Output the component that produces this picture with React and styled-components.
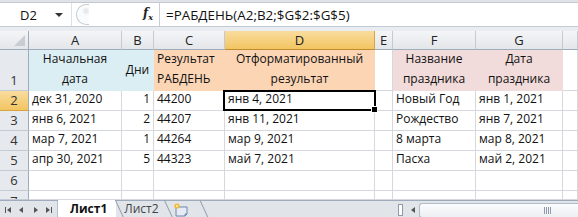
import React from 'react';
import styled, { createGlobalStyle } from 'styled-components';

const GlobalStyle = createGlobalStyle`
  html, body { margin: 0; padding: 0; background: #ffffff; }
  body { font-family: "Open Sans", "Noto Sans", sans-serif; overflow: hidden; }
`;

const COLS = ['A', 'B', 'C', 'D', 'E', 'F', 'G', ''];
const BLUE = '#dbeef4';
const PEACH = '#fcd5b5';
const PINK = '#f2dcdb';
const GRID = '#d5d8dc';

const rows = [
  ['дек 31, 2020', '1', '44200', 'янв 4, 2021', '', 'Новый Год', 'янв 1, 2021'],
  ['янв 6, 2021', '2', '44207', 'янв 11, 2021', '', 'Рождество', 'янв 7, 2021'],
  ['мар 7, 2021', '1', '44264', 'мар 9, 2021', '', '8 марта', 'мар 8, 2021'],
  ['апр 30, 2021', '5', '44323', 'май 7, 2021', '', 'Пасха', 'май 2, 2021'],
];

const Window = styled.div`
  width: 578px;
  height: 217px;
  display: flex;
  flex-direction: column;
  background: #dfe3e8;
  overflow: hidden;
  & > * { flex-shrink: 0; }
`;

const FormulaBar = styled.div`
  height: 23px;
  margin-top: 2px;
  display: flex;
  align-items: stretch;
  background: #ffffff;
  border-top: 1px solid #c4cad2;
  border-bottom: 1px solid #c4cad2;
`;

const NameBox = styled.div`
  width: 72px;
  display: flex;
  align-items: center;
  justify-content: space-between;
  padding: 0 8px 0 20px;
  box-sizing: border-box;
  font-size: 13px;
  color: #111;
  border-right: 1px solid #dde1e6;
`;

const Caret = styled.span`
  width: 0;
  height: 0;
  border-left: 4px solid transparent;
  border-right: 4px solid transparent;
  border-top: 4px solid #333;
`;

const Grip = styled.div`
  width: 88px;
  display: flex;
  align-items: center;
  justify-content: space-between;
  padding: 0 6px 0 4px;
  box-sizing: border-box;
  border-right: 1px solid #c9ced6;
`;

const Knob = styled.span`
  width: 12px;
  height: 19px;
  border: 1px solid #c8cdd4;
  border-right: none;
  border-radius: 10px 0 0 10px;
  background: radial-gradient(circle at 9px 6px, #e8ebee 2px, #fafbfc 4px);
`;

const Fx = styled.span`
  font-family: "DejaVu Serif", "Liberation Serif", serif;
  font-style: italic;
  font-weight: bold;
  font-size: 12px;
  color: #222;
  & sub { font-size: 8px; }
`;

const FormulaText = styled.div`
  display: flex;
  align-items: center;
  padding-left: 6px;
  font-size: 13.4px;
  color: #111;
`;

const Gap = styled.div`
  height: 4px;
  background: #e9ecf0;
`;

const Sheet = styled.div`
  display: grid;
  grid-template-columns: 29px 93px 32px 71px 150px 18px 83px 87px 1fr;
  grid-template-rows: 19px 41px repeat(5, 20px) 9px;
  background: #ffffff;
  position: relative;
  font-size: 12px;
`;

const Corner = styled.div`
  background: linear-gradient(#f4f5f7, #e3e6ea);
  border-right: 1px solid #9eabbb;
  border-bottom: 1px solid #9eabbb;
  position: relative;
  &::after {
    content: '';
    position: absolute;
    right: 3px;
    bottom: 3px;
    border-left: 11px solid transparent;
    border-bottom: 11px solid #c9cdd3;
  }
`;

const ColHead = styled.div`
  display: flex;
  align-items: center;
  justify-content: center;
  font-size: 13px;
  color: #222;
  box-sizing: border-box;
  background: ${p => (p.$active ? 'linear-gradient(#f9dc9e, #f2c561)' : 'linear-gradient(#f4f5f7, #e3e6ea)')};
  border-right: 1px solid ${p => (p.$active ? '#d6a53f' : '#c3cad3')};
  border-bottom: 1px solid ${p => (p.$active ? '#c28a30' : '#9eabbb')};
`;

const RowHead = styled.div`
  display: flex;
  align-items: ${p => (p.$top ? 'flex-start' : 'flex-end')};
  justify-content: center;
  overflow: hidden;
  line-height: 20px;
  box-sizing: border-box;
  font-size: 13px;
  color: #333;
  background: ${p => (p.$active ? 'linear-gradient(#f9dc9e, #f2c561)' : '#e6e9ed')};
  border-right: 1px solid #9eabbb;
  border-bottom: 1px solid ${p => (p.$active ? '#d6a53f' : '#c3cad3')};
`;

const Cell = styled.div`
  box-sizing: border-box;
  display: flex;
  flex-direction: column;
  justify-content: ${p => (p.$middle ? 'center' : 'flex-end')};
  align-items: ${p => (p.$align === 'right' ? 'flex-end' : p.$align === 'center' ? 'center' : 'flex-start')};
  text-align: ${p => p.$align || 'left'};
  padding: 0 3px 1px 3px;
  line-height: 20px;
  color: #111;
  white-space: nowrap;
  overflow: hidden;
  background: ${p => p.$bg || '#ffffff'};
  border-right: 1px solid ${p => p.$bg || GRID};
  border-bottom: 1px solid ${p => p.$bg || GRID};
`;

const Selection = styled.div`
  position: absolute;
  left: 223px;
  top: 59px;
  width: 153px;
  height: 21px;
  border: 2px solid #000;
  box-sizing: border-box;
  pointer-events: none;
  &::after {
    content: '';
    position: absolute;
    right: -4px;
    bottom: -4px;
    width: 5px;
    height: 5px;
    background: #000;
    border: 1px solid #fff;
  }
`;

const TabBar = styled.div`
  flex: 1;
  display: flex;
  align-items: stretch;
  border-top: 1px solid #9eabbb;
  background: #e1e5ea;
  font-size: 12px;
  color: #222;
`;

const Nav = styled.div`
  width: 58px;
  display: flex;
  align-items: center;
  justify-content: space-around;
  padding: 0 2px;
  box-sizing: border-box;
  border-right: 1px solid #b7c0cb;
`;

const Tab = styled.div`
  position: relative;
  display: flex;
  align-items: center;
  padding: 0 ${p => (p.$active ? '9px' : '6px')} 1px ${p => (p.$active ? '12px' : '8px')};
  margin-top: -1px;
  font-weight: ${p => (p.$active ? 700 : 400)};
  color: ${p => (p.$active ? '#111' : '#444')};
  background: ${p => (p.$active ? '#ffffff' : 'transparent')};
  border-bottom: 1px solid #8e9aaa;
  &::after {
    content: '';
    position: absolute;
    right: -4px;
    top: 0;
    bottom: 0;
    width: 1px;
    background: #8e9aaa;
    transform: skewX(25deg);
  }
`;

const NewTab = styled.div`
  position: relative;
  display: flex;
  align-items: center;
  padding: 0 10px 0 8px;
  &::after {
    content: '';
    position: absolute;
    right: -4px;
    top: 0;
    bottom: 0;
    width: 1px;
    background: #8e9aaa;
    transform: skewX(25deg);
  }
`;

const Spacer = styled.div`
  flex: 1;
`;

const Splitter = styled.div`
  width: 3px;
  height: 10px;
  align-self: center;
  border: 1px solid #8e9aaa;
  background: #fff;
  margin-right: 5px;
`;

const ScrollArrow = styled.div`
  width: 10px;
  display: flex;
  align-items: center;
  justify-content: center;
  margin-right: 1px;
`;

const Track = styled.div`
  width: 131px;
  margin: 2px 0 1px 0;
  border: 1px solid #b4bcc7;
  border-right: none;
  border-radius: 3px 0 0 3px;
  background: linear-gradient(#fbfcfd, #eceff3);
  display: flex;
  align-items: center;
  justify-content: flex-end;
  padding-right: 27px;
`;

const GripLines = styled.span`
  width: 7px;
  height: 7px;
  background: repeating-linear-gradient(90deg, #8e9aaa 0 1px, transparent 1px 2px);
`;

const Arrow = ({ dir, bar }) => (
  <svg width="7" height="8" viewBox="0 0 7 8">
    {dir === 'left' ? (
      <>
        {bar && <rect x="0" y="1" width="1" height="6" fill="#555" />}
        <polygon points={bar ? '6,1 2,4 6,7' : '5,1 1,4 5,7'} fill="#555" />
      </>
    ) : (
      <>
        <polygon points={bar ? '1,1 5,4 1,7' : '2,1 6,4 2,7'} fill="#555" />
        {bar && <rect x="6" y="1" width="1" height="6" fill="#555" />}
      </>
    )}
  </svg>
);

const NewSheetIcon = () => (
  <svg width="18" height="14" viewBox="0 0 18 14">
    <path d="M3 4 H14 V11 L12 13 H3 Z" fill="#e6ecf5" stroke="#6b86ad" strokeWidth="1" />
    <path d="M12 13 V11 H14" fill="none" stroke="#6b86ad" strokeWidth="1" />
    <circle cx="4" cy="3" r="2.6" fill="#f5b52e" />
    <circle cx="4" cy="3" r="1.2" fill="#fde79a" />
  </svg>
);

const App = () => (
  <>
    <GlobalStyle />
    <Window>
      <FormulaBar>
        <NameBox>
          D2
          <Caret />
        </NameBox>
        <Grip>
          <Knob />
          <Fx>f<sub>x</sub></Fx>
        </Grip>
        <FormulaText>=РАБДЕНЬ(A2;B2;$G$2:$G$5)</FormulaText>
      </FormulaBar>
      <Gap />
      <Sheet>
        <Corner />
        {COLS.map((c, i) => (
          <ColHead key={i} $active={c === 'D'}>{c}</ColHead>
        ))}

        <RowHead>1</RowHead>
        <Cell $bg={BLUE} $align="center">
          <span>Начальная</span>
          <span>дата</span>
        </Cell>
        <Cell $bg={BLUE} $align="center" $middle>Дни</Cell>
        <Cell $bg={PEACH}>
          <span>Результат</span>
          <span>РАБДЕНЬ</span>
        </Cell>
        <Cell $bg={PEACH} $align="center">
          <span>Отформатированный</span>
          <span>результат</span>
        </Cell>
        <Cell />
        <Cell $bg={PINK} $align="center">
          <span>Название</span>
          <span>праздника</span>
        </Cell>
        <Cell $bg={PINK} $align="center">
          <span>Дата</span>
          <span>праздника</span>
        </Cell>
        <Cell />

        {rows.map((r, ri) => (
          <React.Fragment key={ri}>
            <RowHead $active={ri === 0}>{ri + 2}</RowHead>
            {r.map((v, ci) => (
              <Cell key={ci} $align={ci === 1 ? 'right' : 'left'}>{v}</Cell>
            ))}
            <Cell />
          </React.Fragment>
        ))}

        {[6, 7].map(n => (
          <React.Fragment key={n}>
            <RowHead $top={n === 7}>{n}</RowHead>
            {COLS.map((c, i) => (
              <Cell key={i} />
            ))}
          </React.Fragment>
        ))}
        <Selection />
      </Sheet>
      <TabBar>
        <Nav>
          <Arrow dir="left" bar />
          <Arrow dir="left" />
          <Arrow dir="right" />
          <Arrow dir="right" bar />
        </Nav>
        <Tab $active>Лист1</Tab>
        <Tab>Лист2</Tab>
        <NewTab>
          <NewSheetIcon />
        </NewTab>
        <Spacer />
        <Splitter />
        <ScrollArrow>
          <Arrow dir="left" />
        </ScrollArrow>
        <Track>
          <GripLines />
        </Track>
      </TabBar>
    </Window>
  </>
);

export default App;
